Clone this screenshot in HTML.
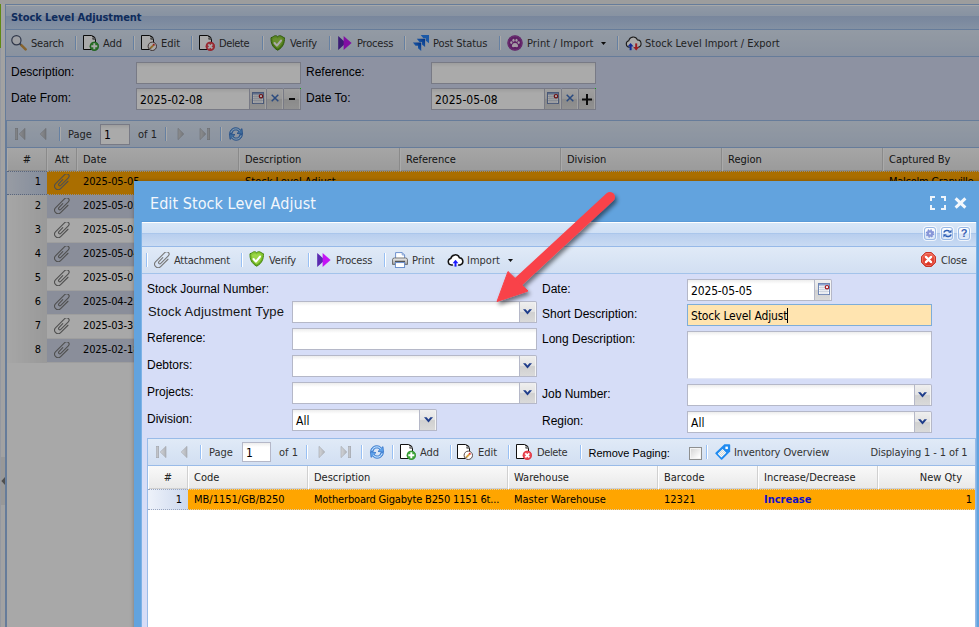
<!DOCTYPE html>
<html><head><meta charset="utf-8"><title>Stock Level Adjustment</title>
<style>
html,body{margin:0;padding:0;}
body{width:979px;height:627px;overflow:hidden;position:relative;background:#fff;font-family:"DejaVu Sans Condensed","Liberation Sans",sans-serif;font-size:11px;color:#222;}
.a{position:absolute;}
.t{position:absolute;white-space:nowrap;line-height:14px;height:14px;color:#333;}
.lb{position:absolute;white-space:nowrap;font-family:"Liberation Sans",sans-serif;font-size:12px;line-height:14px;color:#000;}
.sep{position:absolute;width:1px;height:14px;background:#98c0f4;box-shadow:1px 0 0 #fff;}
.inp{position:absolute;box-sizing:border-box;border:1px solid #b5b8c8;background:#fff linear-gradient(#ededed,#fff 4px);height:22px;}
.trg{position:absolute;box-sizing:border-box;width:17px;height:22px;border:1px solid #b5b8c8;border-left:0;background:linear-gradient(#efefef 0,#e3e3e3 47%,#d0d0d0 53%,#dadada 100%);border-radius:0 2px 0 0;box-shadow:inset -1px 0 0 #f4f4f4;}
.it{position:absolute;white-space:nowrap;font-size:12px;line-height:14px;color:#000;}
.hd{position:absolute;box-sizing:border-box;top:0;height:23px;border-right:1px solid #d0d0d0;border-left:1px solid #fff;line-height:24px;padding-left:5px;color:#222;}
svg{position:absolute;overflow:visible;}
</style></head><body>
<svg width="0" height="0" style="left:0;top:0;width:0;height:0">
<defs>
<linearGradient id="gJira" x1="1" y1="0" x2="0.2" y2="0.8"><stop offset="0.1" stop-color="#0a50c4"/><stop offset="0.7" stop-color="#2682fa"/></linearGradient>
<linearGradient id="gGreen" x1="0" y1="0" x2="0" y2="1"><stop offset="0" stop-color="#8fd03a"/><stop offset="1" stop-color="#5ea516"/></linearGradient>
<linearGradient id="gRed" x1="0" y1="0" x2="0" y2="1"><stop offset="0" stop-color="#f0604e"/><stop offset="1" stop-color="#d82a1c"/></linearGradient>
<linearGradient id="gPg" x1="0" y1="0" x2="1" y2="0"><stop offset="0" stop-color="#d2d4d8"/><stop offset="1" stop-color="#b0b3b8"/></linearGradient>
<linearGradient id="gPr" x1="0" y1="0" x2="0" y2="1"><stop offset="0" stop-color="#f0f0f0"/><stop offset="1" stop-color="#9a9a9a"/></linearGradient>
<symbol id="clip" viewBox="0 0 16 16"><g transform="translate(8.4 7.9) rotate(-45)"><path d="M4.4 3.5 L-6 3.5 A3.5 3.5 0 0 1 -6 -3.5 L7.1 -3.5 A2.4 2.4 0 0 1 7.1 1.3 L-3.6 1.3 A1.3 1.3 0 0 1 -3.6 -1.3 L1.8 -1.3" fill="none" stroke="#787878" stroke-width="1.1" stroke-linecap="round"/></g></symbol>
<symbol id="search" viewBox="0 0 16 16"><circle cx="5.4" cy="5.2" r="4.6" fill="#eceff5" stroke="#46526e" stroke-width="1.2"/><path d="M8.8 8.6 L10.4 10.2" stroke="#46526e" stroke-width="2"/><path d="M10.6 10.3 L14.6 14.3" stroke="#c99546" stroke-width="2.6" stroke-linecap="round"/></symbol>
<symbol id="pgbase" viewBox="0 0 16 16"><path d="M0.5 0.5 H8.6 Q12.5 1.2 12.5 5 V14.5 H0.5Z" fill="#fff" stroke="#111" stroke-width="1"/><path d="M8.6 0.6 Q11.2 2.2 9.8 4.2 Q11.4 3.4 12.4 4.8" fill="#fff" stroke="#111" stroke-width="0.8"/></symbol>
<symbol id="padd" viewBox="0 0 16 16"><use href="#pgbase"/><circle cx="11.3" cy="11.3" r="4.6" fill="#3ea63a"/><circle cx="11.3" cy="11.3" r="4.1" fill="none" stroke="#2f8f2f" stroke-width="0.7"/><path d="M11.3 8.3 v6 M8.3 11.3 h6" stroke="#fff" stroke-width="1.9"/></symbol>
<symbol id="pedit" viewBox="0 0 16 16"><use href="#pgbase"/><circle cx="11.3" cy="11.3" r="4.2" fill="#fff" stroke="#5c4a4a" stroke-width="1"/><path d="M9.2 13.4 L12.2 10.4" stroke="#d9a441" stroke-width="2"/><path d="M12.2 10.4 L13.4 9.2" stroke="#e8322a" stroke-width="2"/><path d="M8.6 14 l0.3 -1.3 l1 1z" fill="#444"/></symbol>
<symbol id="pdel" viewBox="0 0 16 16"><use href="#pgbase"/><circle cx="11.3" cy="11.3" r="4.6" fill="#ec4a55"/><circle cx="11.3" cy="11.3" r="4.1" fill="none" stroke="#d83442" stroke-width="0.7"/><path d="M9.3 9.3 l4 4 M13.3 9.3 l-4 4" stroke="#fff" stroke-width="1.8"/></symbol>
<symbol id="verify" viewBox="0 0 16 16"><path d="M7.7 1.8 C6.6 0.3 4.6 0.5 3.4 1.5 C2.6 2.1 1.8 2.5 1 2.7 C0.7 8 2.5 12.4 7.7 15.2 C12.9 12.4 14.7 8 14.4 2.7 C13.6 2.5 12.8 2.1 12 1.5 C10.8 0.5 8.8 0.3 7.7 1.8z" fill="url(#gGreen)" stroke="#47850f" stroke-width="1"/><path d="M7.7 3.6 C6.6 2.4 4.8 3 2.9 4 C2.8 8 4.2 11.2 7.7 13.4 C11.2 11.2 12.6 8 12.5 4 C10.6 3 8.8 2.4 7.7 3.6z" fill="#a8dd52" opacity="0.7"/><path d="M4.5 8 L6.9 10.6 L11 5.6" fill="none" stroke="#fff" stroke-width="2.1" stroke-linecap="round" stroke-linejoin="round"/></symbol>
<symbol id="process" viewBox="0 0 16 16"><path d="M1.2 1 L9 8 L1.2 15z" fill="#5a2ab0"/><path d="M6.6 1 L14.6 8 L6.6 15z" fill="#c414f5"/></symbol>
<symbol id="post" viewBox="0 0 17 17"><path d="M8.7 0.0 H17.0 V8.3 L13.8 5.7 V3.2 H11.3z" fill="#2a86fb"/><path d="M4.8 3.8 H13.1 V12.1 L9.9 9.5 V7.0 H7.4z" fill="url(#gJira)"/><path d="M0.9 7.6 H9.2 V15.9 L6.0 13.3 V10.8 H3.5z" fill="url(#gJira)"/></symbol>
<symbol id="paw" viewBox="0 0 16 16"><circle cx="8" cy="8" r="7.7" fill="#8d2f96"/><circle cx="8" cy="8" r="6.9" fill="none" stroke="#a64bb0" stroke-width="0.8"/><path d="M8 8 C5.8 8 4.6 10 5 11.4 C5.4 12.6 6.8 12 8 12 C9.2 12 10.6 12.6 11 11.4 C11.4 10 10.2 8 8 8z" fill="#f6e8f7"/><ellipse cx="4.3" cy="7.6" rx="1.1" ry="1.4" fill="#f6e8f7"/><ellipse cx="6.5" cy="5.3" rx="1.1" ry="1.5" fill="#f6e8f7"/><ellipse cx="9.5" cy="5.3" rx="1.1" ry="1.5" fill="#f6e8f7"/><ellipse cx="11.7" cy="7.6" rx="1.1" ry="1.4" fill="#f6e8f7"/></symbol>
<symbol id="cloudio" viewBox="0 0 17 16"><path d="M4.4 12.2 a3.3 3.3 0 0 1 -0.6 -6.5 a4.5 4.5 0 0 1 8.6 -0.8 a3.7 3.7 0 0 1 0.8 7.3" fill="#fff" stroke="#2a2a2a" stroke-width="1.1" stroke-linecap="round"/><path d="M5.6 15.2 v-5" stroke="#1a3fe0" stroke-width="2"/><path d="M2.6 11.6 L5.6 8 L8.6 11.6z" fill="#1a3fe0"/><path d="M11.2 8.4 v4.6" stroke="#ea2a30" stroke-width="2"/><path d="M8.2 12 L11.2 15.6 L14.2 12z" fill="#ea2a30"/></symbol>
<symbol id="cloudup" viewBox="0 0 17 16"><path d="M5.4 13 h-1 a3.3 3.3 0 0 1 -0.6 -6.5 a4.5 4.5 0 0 1 8.6 -0.8 a3.7 3.7 0 0 1 0.6 7.3 h-1.4" fill="#fff" stroke="#111" stroke-width="1.5" stroke-linecap="round"/><path d="M8.5 14.6 v-4.4" stroke="#1a1aff" stroke-width="2"/><path d="M5.6 11.2 L8.5 7.8 L11.4 11.2z" fill="#1a1aff"/></symbol>
<symbol id="cal" viewBox="0 0 12 12"><rect x="0.5" y="0.5" width="11" height="11" fill="#fdfdfd" stroke="#6f86b4"/><rect x="1" y="1" width="10" height="1.6" fill="#8fa6d0"/><path d="M1 4.5h10M1 6.5h10M1 8.5h10M3 2.5v9M5 2.5v9M7 2.5v9M9 2.5v9" stroke="#c3cad8" stroke-width="0.7"/><circle cx="9" cy="4.2" r="1.7" fill="#fff" stroke="#a4181e" stroke-width="1.2"/></symbol>
<symbol id="pfirst" viewBox="0 0 16 16"><rect x="3.3" y="2.3" width="2.4" height="11.4" fill="url(#gPg)" stroke="#a2a6ac" stroke-width="0.6"/><path d="M13 2.3 L7.2 8 L13 13.7z" fill="url(#gPg)" stroke="#a2a6ac" stroke-width="0.6"/></symbol>
<symbol id="pprev" viewBox="0 0 16 16"><path d="M10 2.3 L4.2 8 L10 13.7z" fill="url(#gPg)" stroke="#a2a6ac" stroke-width="0.6"/></symbol>
<symbol id="pnext" viewBox="0 0 16 16"><path d="M6 2.3 L11.8 8 L6 13.7z" fill="url(#gPg)" stroke="#a2a6ac" stroke-width="0.6"/></symbol>
<symbol id="plast" viewBox="0 0 16 16"><path d="M3 2.3 L8.8 8 L3 13.7z" fill="url(#gPg)" stroke="#a2a6ac" stroke-width="0.6"/><rect x="10.3" y="2.3" width="2.4" height="11.4" fill="url(#gPg)" stroke="#a2a6ac" stroke-width="0.6"/></symbol>
<symbol id="refresh" viewBox="0 0 16 16"><path d="M1.6 7.4 C1.8 3.8 5 1.4 8.4 1.7 C10.2 1.9 11.6 2.8 12.5 4 L14 2.6 L14.6 8.2 L9 7.4 L10.7 5.8 C10.1 4.8 9.2 4.1 8 4 C6 3.9 4.4 5.2 4.2 7.4z" fill="#5fa2ea" stroke="#2a6cc4" stroke-width="0.7"/><path d="M14.4 8.6 C14.2 12.2 11 14.6 7.6 14.3 C5.8 14.1 4.4 13.2 3.5 12 L2 13.4 L1.4 7.8 L7 8.6 L5.3 10.2 C5.9 11.2 6.8 11.9 8 12 C10 12.1 11.6 10.8 11.8 8.6z" fill="#5fa2ea" stroke="#2a6cc4" stroke-width="0.7"/><path d="M2.9 6.6 C3.6 4 6 2.7 8.3 2.9 C9.7 3 10.9 3.7 11.7 4.7" fill="none" stroke="#d6e9fd" stroke-width="0.9"/><path d="M13.1 9.4 C12.4 12 10 13.3 7.7 13.1 C6.3 13 5.1 12.3 4.3 11.3" fill="none" stroke="#d6e9fd" stroke-width="0.9"/></symbol>
<symbol id="printer" viewBox="0 0 16 16"><path d="M3.6 6.4 V0.6 h6.6 l2.4 2.4 V6.4" fill="#fff" stroke="#5f86c8" stroke-width="0.9"/><path d="M10.2 0.6 v2.4 h2.4" fill="none" stroke="#5f86c8" stroke-width="0.7"/><path d="M2.4 6 h11.2 a1.9 1.9 0 0 1 1.9 1.9 V12.4 h-15 V7.9 a1.9 1.9 0 0 1 1.9 -1.9z" fill="url(#gPr)" stroke="#666" stroke-width="0.9"/><rect x="3.4" y="10.6" width="9.2" height="4.9" fill="#fff" stroke="#5f86c8" stroke-width="0.9"/><path d="M3 9.4 h10" stroke="#555" stroke-width="1.2"/></symbol>
<symbol id="closei" viewBox="0 0 16 16"><path d="M4.9 0.6 h6.2 l4.3 4.3 v6.2 l-4.3 4.3 h-6.2 l-4.3 -4.3 v-6.2z" fill="url(#gRed)" stroke="#c4261a" stroke-width="1"/><path d="M5.3 1.7 h5.4 l3.6 3.6 v5.4 l-3.6 3.6 h-5.4 l-3.6 -3.6 v-5.4z" fill="none" stroke="#f59a8c" stroke-width="0.8" opacity="0.8"/><path d="M5.2 5.2 l5.6 5.6 M10.8 5.2 l-5.6 5.6" stroke="#fff" stroke-width="2.4" stroke-linecap="round"/></symbol>
<symbol id="tag" viewBox="0 0 16 16"><path d="M9.4 0.3 H14.4 Q15.2 0.3 15.2 1.1 V7.4 L7.2 15.6 Q6.6 16.1 6 15.6 L0.5 9.8 Q0 9.2 0.5 8.7z" fill="#1f8af0"/><rect x="10.4" y="2.6" width="2.5" height="2.5" fill="#fff"/><g transform="translate(7 9.3) rotate(-45)"><rect x="-3.4" y="-2.6" width="6.8" height="5.2" fill="#fff"/><path d="M-2 -2.6v5.2M-0.6 -2.6v5.2M0.8 -2.6v5.2M2.2 -2.6v5.2" stroke="#9aa" stroke-width="0.5"/></g></symbol>
<symbol id="combo" viewBox="0 0 9 6"><path d="M0 0.2 H2.6 L4.5 2.4 L6.4 0.2 H9 L4.5 5.6z" fill="#1f3d8a"/></symbol>
</defs></svg>

<!-- ================= BACKGROUND PAGE ================= -->
<div id="bg" class="a" style="left:0;top:0;width:979px;height:627px;background:#fdfdfd;">
 <div class="a" style="left:0;top:0;width:979px;height:4px;background:#ececec;"></div>
 <div class="a" style="left:0;top:4px;width:5px;height:623px;background:#f4f4f4;"></div>
 <div class="a" style="left:0;top:4px;width:1px;height:44px;background:#8fce1c;"></div>
 <div class="a" style="left:0;top:48px;width:1px;height:579px;background:#dfe4f0;"></div>
 <div class="a" style="left:1px;top:457px;width:4px;height:48px;background:#e4e4e4;"></div>
 <svg style="left:1px;top:477px" width="4" height="8"><path d="M4 0 L0.4 4 L4 8z" fill="#777"/></svg>
 <!-- panel border -->
 <div class="a" style="left:5px;top:4px;width:1px;height:623px;background:#99bbe8;"></div>
 <!-- panel header -->
 <div class="a" style="left:6px;top:4px;width:973px;height:26px;box-sizing:border-box;border-top:1px solid #99bbe8;border-bottom:1px solid #99bbe8;background:linear-gradient(#fbfcfe 0,#fbfcfe 1px,#d9e5f7 1px,#cbdcf3 11px,#b5caeb 11px,#bacfef 16px,#c6daf5 24px);"></div>
 <div class="t" style="left:11px;top:11px;font-weight:bold;color:#15428b;letter-spacing:-0.08px;">Stock Level Adjustment</div>
 <!-- toolbar -->
 <div class="a" style="left:6px;top:30px;width:973px;height:27px;box-sizing:border-box;border-bottom:1px solid #99bbe8;background:linear-gradient(#dde8f6,#cfdcf0);"></div>
 <!-- form -->
 <div class="a" style="left:6px;top:57px;width:973px;height:63px;background:#d4dcf4;"></div>
 <!-- paging toolbar -->
 <div class="a" style="left:6px;top:120px;width:973px;height:28px;box-sizing:border-box;border-left:1px solid #99bbe8;border-top:1px solid #99bbe8;border-bottom:1px solid #99bbe8;background:linear-gradient(#dde8f6,#cfdcf0);"></div>
 <!-- grid header -->
 <div class="a" style="left:6px;top:148px;width:973px;height:23px;box-sizing:border-box;border-left:1px solid #99bbe8;border-bottom:1px solid #d0d0d0;background:linear-gradient(#f9f9f9,#e9e9e9);"></div>
 <div class="a" style="left:6px;top:171px;width:1px;height:456px;background:#99bbe8;"></div>
<svg style="left:11px;top:35px" width="16" height="16"><use href="#search"/></svg>
<div class="t" style="left:31px;top:37px;letter-spacing:-0.2px">Search</div>
<svg style="left:83px;top:35px" width="16" height="16"><use href="#padd"/></svg>
<div class="t" style="left:103px;top:37px;">Add</div>
<svg style="left:141px;top:35px" width="16" height="16"><use href="#pedit"/></svg>
<div class="t" style="left:161px;top:37px;">Edit</div>
<svg style="left:199px;top:35px" width="16" height="16"><use href="#pdel"/></svg>
<div class="t" style="left:219px;top:37px;letter-spacing:-0.38px">Delete</div>
<svg style="left:270px;top:35px" width="16" height="16"><use href="#verify"/></svg>
<div class="t" style="left:290px;top:37px;letter-spacing:-0.15px">Verify</div>
<svg style="left:337px;top:35px" width="16" height="16"><use href="#process"/></svg>
<div class="t" style="left:357px;top:37px;letter-spacing:-0.18px">Process</div>
<svg style="left:412px;top:35px" width="17" height="17"><use href="#post"/></svg>
<div class="t" style="left:433px;top:37px;letter-spacing:-0.1px">Post Status</div>
<svg style="left:507px;top:35px" width="16" height="16"><use href="#paw"/></svg>
<div class="t" style="left:527px;top:37px;letter-spacing:0.1px">Print / Import</div>
<svg style="left:625px;top:35px" width="17" height="16"><use href="#cloudio"/></svg>
<div class="t" style="left:645px;top:37px;">Stock Level Import / Export</div>
<div class="sep" style="left:75px;top:36px"></div>
<div class="sep" style="left:133px;top:36px"></div>
<div class="sep" style="left:191px;top:36px"></div>
<div class="sep" style="left:262px;top:36px"></div>
<div class="sep" style="left:329px;top:36px"></div>
<div class="sep" style="left:404px;top:36px"></div>
<div class="sep" style="left:499px;top:36px"></div>
<div class="sep" style="left:617px;top:36px"></div>
<svg style="left:601px;top:42px" width="5" height="3"><path d="M0 0h5L2.5 3z" fill="#111"/></svg>
<div class="lb" style="left:11px;top:65px">Description:</div>
<div class="lb" style="left:306px;top:65px">Reference:</div>
<div class="lb" style="left:11px;top:91px">Date From:</div>
<div class="lb" style="left:306px;top:91px">Date To:</div>
<div class="inp" style="left:136px;top:62px;width:165px"></div>
<div class="inp" style="left:431px;top:62px;width:165px"></div>
<div class="inp" style="left:136px;top:88px;width:114px"></div>
<div class="it" style="left:140px;top:93px">2025-02-08</div>
<div class="trg" style="left:250px;top:88px;width:17px"></div>
<div class="trg" style="left:267px;top:88px;width:17px"></div>
<div class="trg" style="left:284px;top:88px;width:17px"></div>
<svg style="left:252px;top:92px" width="12" height="12"><use href="#cal"/></svg>
<svg style="left:271px;top:94px" width="8" height="8"><path d="M0.7 0.7l6.6 6.6M7.3 0.7l-6.6 6.6" stroke="#3f6fbf" stroke-width="1.5"/></svg>
<svg style="left:288px;top:94px" width="9" height="9"><path d="M1 5h6" stroke="#111" stroke-width="2"/></svg>
<div class="inp" style="left:431px;top:88px;width:114px"></div>
<div class="it" style="left:435px;top:93px">2025-05-08</div>
<div class="trg" style="left:545px;top:88px;width:17px"></div>
<div class="trg" style="left:562px;top:88px;width:17px"></div>
<div class="trg" style="left:579px;top:88px;width:17px"></div>
<svg style="left:547px;top:92px" width="12" height="12"><use href="#cal"/></svg>
<svg style="left:566px;top:94px" width="8" height="8"><path d="M0.7 0.7l6.6 6.6M7.3 0.7l-6.6 6.6" stroke="#3f6fbf" stroke-width="1.5"/></svg>
<svg style="left:582px;top:94px" width="10" height="11"><path d="M0 5.5h10M5 0v11" stroke="#111" stroke-width="2"/></svg><div class="a" style="left:300px;top:88px;width:1px;height:1px;background:#1eff1e"></div><div class="a" style="left:595px;top:88px;width:1px;height:1px;background:#1eff1e"></div>
<svg style="left:12px;top:126px" width="16" height="16"><use href="#pfirst"/></svg>
<svg style="left:36px;top:126px" width="16" height="16"><use href="#pprev"/></svg>
<div class="sep" style="left:59px;top:127px"></div>
<div class="t" style="left:68px;top:128px;">Page</div>
<div class="inp" style="left:100px;top:124px;width:30px;height:21px"></div>
<div class="it" style="left:104px;top:128px;">1</div>
<div class="t" style="left:138px;top:128px;">of 1</div>
<div class="sep" style="left:165px;top:127px"></div>
<svg style="left:172px;top:126px" width="16" height="16"><use href="#pnext"/></svg>
<svg style="left:197px;top:126px" width="16" height="16"><use href="#plast"/></svg>
<div class="sep" style="left:220px;top:127px"></div>
<svg style="left:228px;top:126px" width="16" height="16"><use href="#refresh"/></svg>
<div class="hd" style="left:7px;top:148px;width:40px;text-align:center;padding-left:0;">#</div>
<div class="hd" style="left:47px;top:148px;width:30px;text-align:center;padding-left:0;">Att</div>
<div class="hd" style="left:77px;top:148px;width:162px;">Date</div>
<div class="hd" style="left:239px;top:148px;width:161px;">Description</div>
<div class="hd" style="left:400px;top:148px;width:161px;">Reference</div>
<div class="hd" style="left:561px;top:148px;width:161px;">Division</div>
<div class="hd" style="left:722px;top:148px;width:161px;">Region</div>
<div class="hd" style="left:883px;top:148px;width:161px;">Captured By</div>
<div class="a" style="left:47px;top:171px;width:932px;height:24px;box-sizing:border-box;background:#ffa500;border-top:1px dotted #d4d4d4;border-bottom:1px dotted #d4d4d4;"></div>
<div class="a" style="left:7px;top:171px;width:40px;height:24px;box-sizing:border-box;background:linear-gradient(90deg,#e4eaf6,#c6d3ea);border-top:1px dotted #8899bb;border-bottom:1px dotted #8899bb;"></div>
<div class="t" style="left:7px;top:175px;width:34px;text-align:right;color:#000">1</div>
<svg style="left:54px;top:174px" width="16" height="16"><use href="#clip"/></svg>
<div class="t" style="left:83px;top:175px;letter-spacing:-0.12px;color:#000">2025-05-05</div>
<div class="a" style="left:47px;top:195px;width:932px;height:24px;box-sizing:border-box;background:#d0d6e7;border-bottom:1px solid #ededed;"></div>
<div class="a" style="left:7px;top:195px;width:40px;height:24px;background:linear-gradient(90deg,#fafafa,#e6e6e6);"></div>
<div class="t" style="left:7px;top:199px;width:34px;text-align:right;color:#000">2</div>
<svg style="left:54px;top:198px" width="16" height="16"><use href="#clip"/></svg>
<div class="t" style="left:83px;top:199px;letter-spacing:-0.12px;color:#000">2025-05-05</div>
<div class="a" style="left:47px;top:219px;width:932px;height:24px;box-sizing:border-box;background:#fdfdfd;border-bottom:1px solid #ededed;"></div>
<div class="a" style="left:7px;top:219px;width:40px;height:24px;background:linear-gradient(90deg,#fafafa,#e6e6e6);"></div>
<div class="t" style="left:7px;top:223px;width:34px;text-align:right;color:#000">3</div>
<svg style="left:54px;top:222px" width="16" height="16"><use href="#clip"/></svg>
<div class="t" style="left:83px;top:223px;letter-spacing:-0.12px;color:#000">2025-05-05</div>
<div class="a" style="left:47px;top:243px;width:932px;height:24px;box-sizing:border-box;background:#d0d6e7;border-bottom:1px solid #ededed;"></div>
<div class="a" style="left:7px;top:243px;width:40px;height:24px;background:linear-gradient(90deg,#fafafa,#e6e6e6);"></div>
<div class="t" style="left:7px;top:247px;width:34px;text-align:right;color:#000">4</div>
<svg style="left:54px;top:246px" width="16" height="16"><use href="#clip"/></svg>
<div class="t" style="left:83px;top:247px;letter-spacing:-0.12px;color:#000">2025-05-04</div>
<div class="a" style="left:47px;top:267px;width:932px;height:24px;box-sizing:border-box;background:#fdfdfd;border-bottom:1px solid #ededed;"></div>
<div class="a" style="left:7px;top:267px;width:40px;height:24px;background:linear-gradient(90deg,#fafafa,#e6e6e6);"></div>
<div class="t" style="left:7px;top:271px;width:34px;text-align:right;color:#000">5</div>
<svg style="left:54px;top:270px" width="16" height="16"><use href="#clip"/></svg>
<div class="t" style="left:83px;top:271px;letter-spacing:-0.12px;color:#000">2025-05-01</div>
<div class="a" style="left:47px;top:291px;width:932px;height:24px;box-sizing:border-box;background:#d0d6e7;border-bottom:1px solid #ededed;"></div>
<div class="a" style="left:7px;top:291px;width:40px;height:24px;background:linear-gradient(90deg,#fafafa,#e6e6e6);"></div>
<div class="t" style="left:7px;top:295px;width:34px;text-align:right;color:#000">6</div>
<svg style="left:54px;top:294px" width="16" height="16"><use href="#clip"/></svg>
<div class="t" style="left:83px;top:295px;letter-spacing:-0.12px;color:#000">2025-04-25</div>
<div class="a" style="left:47px;top:315px;width:932px;height:24px;box-sizing:border-box;background:#fdfdfd;border-bottom:1px solid #ededed;"></div>
<div class="a" style="left:7px;top:315px;width:40px;height:24px;background:linear-gradient(90deg,#fafafa,#e6e6e6);"></div>
<div class="t" style="left:7px;top:319px;width:34px;text-align:right;color:#000">7</div>
<svg style="left:54px;top:318px" width="16" height="16"><use href="#clip"/></svg>
<div class="t" style="left:83px;top:319px;letter-spacing:-0.12px;color:#000">2025-03-31</div>
<div class="a" style="left:47px;top:339px;width:932px;height:24px;box-sizing:border-box;background:#d0d6e7;border-bottom:1px solid #ededed;"></div>
<div class="a" style="left:7px;top:339px;width:40px;height:24px;background:linear-gradient(90deg,#fafafa,#e6e6e6);"></div>
<div class="t" style="left:7px;top:343px;width:34px;text-align:right;color:#000">8</div>
<svg style="left:54px;top:342px" width="16" height="16"><use href="#clip"/></svg>
<div class="t" style="left:83px;top:343px;letter-spacing:-0.12px;color:#000">2025-02-18</div>
<div class="t" style="left:245px;top:175px;color:#000">Stock Level Adjust</div>
<div class="t" style="left:889px;top:175px;letter-spacing:-0.25px;color:#000">Malcolm Granville</div>
</div>

<!-- mask -->
<div class="a" style="left:0;top:0;width:979px;height:627px;background:rgba(0,0,0,0.335);"></div>

<!-- ================= WINDOW ================= -->
<div id="win" class="a" style="left:134px;top:181px;width:860px;height:460px;background:#62a3de;box-shadow:0 0 4px rgba(0,0,0,0.28);"></div>
<div class="a" style="left:150px;top:193px;font-size:16px;letter-spacing:0.07px;line-height:22px;color:#f3f7fc;white-space:nowrap;">Edit Stock Level Adjust</div>

<svg style="left:930px;top:196px" width="16" height="14"><path d="M1 5V1h4M11 1h4v4M15 9v4h-4M5 13H1V9" fill="none" stroke="#eef4fb" stroke-width="2"/></svg>
<svg style="left:954px;top:197px" width="13" height="12"><path d="M1.6 1.4l9.8 9.2M11.4 1.4l-9.8 9.2" stroke="#f4f8fc" stroke-width="3"/></svg>
<div class="a" style="left:141px;top:221px;width:836px;height:420px;background:#7db2e6;"></div><div class="a" style="left:141px;top:221px;width:836px;height:1px;background:#5a9ad8;"></div><div class="a" style="left:142px;top:222px;width:834px;height:420px;background:#d6ddf7;"></div>
<div class="a" style="left:142px;top:222px;width:834px;height:25px;box-sizing:border-box;border-bottom:1px solid #96b9e8;background:linear-gradient(#ffffff 0,#ffffff 1px,#d8e6f7 1px,#d0e0f5 11px,#aac6eb 11px,#aac6eb 12px,#b8ceee 12px,#c9dbf3 24px);"></div>
<div class="a" style="left:924px;top:227px;width:12px;height:13px;box-sizing:border-box;border:1px solid #98b8e6;border-radius:3px;background:linear-gradient(#ffffff,#f2f7fd 45%,#d5e3f6 55%,#e2ecf9);box-shadow:0 0 0 1px rgba(255,255,255,0.75);"></div>
<div class="a" style="left:941px;top:227px;width:12px;height:13px;box-sizing:border-box;border:1px solid #98b8e6;border-radius:3px;background:linear-gradient(#ffffff,#f2f7fd 45%,#d5e3f6 55%,#e2ecf9);box-shadow:0 0 0 1px rgba(255,255,255,0.75);"></div>
<div class="a" style="left:958px;top:227px;width:12px;height:13px;box-sizing:border-box;border:1px solid #98b8e6;border-radius:3px;background:linear-gradient(#ffffff,#f2f7fd 45%,#d5e3f6 55%,#e2ecf9);box-shadow:0 0 0 1px rgba(255,255,255,0.75);"></div>
<svg style="left:925px;top:228px" width="10" height="10"><circle cx="5" cy="5.5" r="3.5" fill="none" stroke="#7f8ed2" stroke-width="1.5" stroke-dasharray="1.45 1.3"/><circle cx="5" cy="5.5" r="3.3" fill="#8796d8"/><circle cx="5" cy="5.5" r="1.1" fill="#dde5f6"/></svg>
<svg style="left:942.5px;top:228.5px" width="9" height="9"><path d="M0.8 3.6 C1.6 1.4 5 0.8 6.6 2.6 M8.2 5.4 C7.4 7.6 4 8.2 2.4 6.4" fill="none" stroke="#2f5fb5" stroke-width="1.5"/><path d="M5.2 3.8 L8.6 3.8 L8.6 0.6z M3.8 5.2 L0.4 5.2 L0.4 8.4z" fill="#2f5fb5"/></svg>
<div class="a" style="left:956.5px;top:225.5px;width:15px;height:15px;line-height:15px;text-align:center;font-family:'Liberation Sans',sans-serif;font-weight:bold;font-size:11px;color:#3a62b5;">?</div>
<div class="a" style="left:142px;top:247px;width:834px;height:27px;box-sizing:border-box;border-bottom:1px solid #a3c3ea;background:linear-gradient(#e0eaf7,#d2dff2);"></div>
<div class="sep" style="left:146px;top:253px"></div>
<svg style="left:154px;top:252px" width="16" height="16"><use href="#clip"/></svg>
<div class="t" style="left:174px;top:254px;letter-spacing:-0.22px">Attachment</div>
<div class="sep" style="left:241px;top:253px"></div>
<svg style="left:249px;top:251px" width="16" height="16"><use href="#verify"/></svg>
<div class="t" style="left:269px;top:254px;letter-spacing:-0.15px">Verify</div>
<div class="sep" style="left:308px;top:253px"></div>
<svg style="left:316px;top:252px" width="16" height="16"><use href="#process"/></svg>
<div class="t" style="left:336px;top:254px;letter-spacing:-0.18px">Process</div>
<div class="sep" style="left:384px;top:253px"></div>
<svg style="left:392px;top:252px" width="16" height="16"><use href="#printer"/></svg>
<div class="t" style="left:412px;top:254px;">Print</div>
<svg style="left:447px;top:252px" width="17" height="16"><use href="#cloudup"/></svg>
<div class="t" style="left:467px;top:254px;">Import</div>
<svg style="left:508px;top:259px" width="5" height="3"><path d="M0 0h5L2.5 3z" fill="#111"/></svg>
<svg style="left:921px;top:252px" width="15" height="15"><use href="#closei"/></svg>
<div class="t" style="left:941px;top:254px;letter-spacing:-0.2px">Close</div>
<div class="lb" style="left:147px;top:282px">Stock Journal Number:</div>
<div class="lb" style="left:147px;top:331px">Reference:</div>
<div class="lb" style="left:147px;top:358px">Debtors:</div>
<div class="lb" style="left:147px;top:385px">Projects:</div>
<div class="lb" style="left:147px;top:412px">Division:</div>
<div class="lb" style="left:148px;top:304px;font-size:13px;letter-spacing:0.2px;line-height:16px;color:#151515;">Stock Adjustment Type</div>
<div class="lb" style="left:542px;top:282px">Date:</div>
<div class="lb" style="left:542px;top:307px">Short Description:</div>
<div class="lb" style="left:542px;top:332px">Long Description:</div>
<div class="lb" style="left:542px;top:387px">Job Number:</div>
<div class="lb" style="left:542px;top:414px">Region:</div>
<div class="inp" style="left:292px;top:301px;width:228px"></div><div class="trg" style="left:520px;top:301px"></div><svg style="left:523px;top:309px" width="9" height="6"><use href="#combo"/></svg>
<div class="inp" style="left:292px;top:328px;width:245px"></div>
<div class="inp" style="left:292px;top:355px;width:228px"></div><div class="trg" style="left:520px;top:355px"></div><svg style="left:523px;top:363px" width="9" height="6"><use href="#combo"/></svg>
<div class="inp" style="left:292px;top:382px;width:228px"></div><div class="trg" style="left:520px;top:382px"></div><svg style="left:523px;top:390px" width="9" height="6"><use href="#combo"/></svg>
<div class="inp" style="left:292px;top:409px;width:128px"></div><div class="trg" style="left:420px;top:409px"></div><svg style="left:424px;top:417px" width="9" height="6"><use href="#combo"/></svg>
<div class="it" style="left:296px;top:414px">All</div>
<div class="inp" style="left:687px;top:279px;width:128px"></div><div class="trg" style="left:815px;top:279px"></div>
<svg style="left:818px;top:283px" width="12" height="12"><use href="#cal"/></svg>
<div class="it" style="left:691px;top:284px;letter-spacing:-0.15px">2025-05-05</div>
<div class="inp" style="left:687px;top:304px;width:245px;background:#ffe4b0;border-color:#7eadd9;"></div>
<div class="it" style="left:691px;top:309px;letter-spacing:-0.15px">Stock Level Adjust</div>
<div class="a" style="left:787px;top:308px;width:1px;height:15px;background:#000"></div>
<div class="inp" style="left:687px;top:331px;width:245px;height:48px;border-bottom-color:#e4e8f6"></div>
<div class="inp" style="left:687px;top:384px;width:228px"></div><div class="trg" style="left:915px;top:384px"></div><svg style="left:918px;top:392px" width="9" height="6"><use href="#combo"/></svg>
<div class="inp" style="left:687px;top:411px;width:228px"></div><div class="trg" style="left:915px;top:411px"></div><svg style="left:918px;top:419px" width="9" height="6"><use href="#combo"/></svg>
<div class="it" style="left:691px;top:416px">All</div>
<div class="a" style="left:147px;top:438px;width:829px;height:200px;box-sizing:border-box;border:1px solid #99bbe8;background:#fff;"></div>
<div class="a" style="left:148px;top:439px;width:827px;height:27px;box-sizing:border-box;border-bottom:1px solid #99bbe8;background:linear-gradient(#e0eaf7,#d2dff2);"></div>
<svg style="left:153px;top:444px" width="16" height="16"><use href="#pfirst"/></svg>
<svg style="left:177px;top:444px" width="16" height="16"><use href="#pprev"/></svg>
<div class="sep" style="left:200px;top:445px"></div>
<div class="t" style="left:209px;top:446px;">Page</div>
<div class="inp" style="left:242px;top:442px;width:29px;height:20px"></div><div class="it" style="left:246px;top:446px;">1</div>
<div class="t" style="left:279px;top:446px;">of 1</div>
<div class="sep" style="left:306px;top:445px"></div>
<svg style="left:313px;top:444px" width="16" height="16"><use href="#pnext"/></svg>
<svg style="left:338px;top:444px" width="16" height="16"><use href="#plast"/></svg>
<div class="sep" style="left:361px;top:445px"></div>
<svg style="left:369px;top:444px" width="16" height="16"><use href="#refresh"/></svg>
<div class="sep" style="left:392px;top:445px"></div>
<svg style="left:400px;top:444px" width="16" height="16"><use href="#padd"/></svg>
<div class="t" style="left:420px;top:446px;">Add</div>
<div class="sep" style="left:450px;top:445px"></div>
<svg style="left:457px;top:444px" width="16" height="16"><use href="#pedit"/></svg>
<div class="t" style="left:478px;top:446px;">Edit</div>
<div class="sep" style="left:508px;top:445px"></div>
<svg style="left:516px;top:444px" width="16" height="16"><use href="#pdel"/></svg>
<div class="t" style="left:537px;top:446px;letter-spacing:-0.38px">Delete</div>
<div class="sep" style="left:580px;top:445px"></div>
<div class="lb" style="left:588.5px;top:446px;font-size:11px;">Remove Paging:</div>
<div class="a" style="left:689px;top:447px;width:13px;height:13px;box-sizing:border-box;border:1px solid #8e8f8f;background:linear-gradient(135deg,#d2d2d2,#ffffff 85%);box-shadow:inset 0 0 0 1px #f4f4f4"></div>
<div class="sep" style="left:706px;top:445px"></div>
<svg style="left:715px;top:444px" width="16" height="16"><use href="#tag"/></svg>
<div class="t" style="left:734px;top:446px;letter-spacing:-0.1px">Inventory Overview</div>
<div class="t" style="left:870.5px;top:446px;letter-spacing:-0.12px">Displaying 1 - 1 of 1</div>
<div class="a" style="left:148px;top:466px;width:827px;height:23px;box-sizing:border-box;border-bottom:1px solid #d0d0d0;background:linear-gradient(#f9f9f9,#e9e9e9);"></div>
<div class="hd" style="left:148px;top:466px;width:40px;text-align:center;padding-left:0;">#</div>
<div class="hd" style="left:188px;top:466px;width:120px;">Code</div>
<div class="hd" style="left:308px;top:466px;width:200px;">Description</div>
<div class="hd" style="left:508px;top:466px;width:150px;">Warehouse</div>
<div class="hd" style="left:658px;top:466px;width:100px;">Barcode</div>
<div class="hd" style="left:758px;top:466px;width:120px;">Increase/Decrease</div>
<div class="hd" style="left:878px;top:466px;width:97px;text-align:right;padding-right:13px;border-right:0;">New Qty</div>
<div class="a" style="left:188px;top:489px;width:787px;height:21px;box-sizing:border-box;background:#ffa500;border-top:1px dotted #d6cdb8;border-bottom:1px dotted #d6cdb8;"></div>
<div class="a" style="left:148px;top:489px;width:40px;height:21px;box-sizing:border-box;background:linear-gradient(90deg,#eef2fa,#ccd8ee);border-top:1px dotted #99a6c0;border-bottom:1px dotted #99a6c0;"></div>
<div class="t" style="left:148px;top:493px;width:34px;text-align:right;color:#000">1</div>
<div class="t" style="left:194px;top:493px;color:#000">MB/1151/GB/B250</div>
<div class="t" style="left:314px;top:493px;color:#000;letter-spacing:-0.17px">Motherboard Gigabyte B250 1151 6t...</div>
<div class="t" style="left:514px;top:493px;color:#000">Master Warehouse</div>
<div class="t" style="left:664px;top:493px;color:#000">12321</div>
<div class="t" style="left:764px;top:493px;color:#1010c8;font-weight:bold">Increase</div>
<div class="t" style="left:878px;top:493px;width:94px;text-align:right;color:#000">1</div>
<svg style="left:0;top:0" width="979" height="627"><defs><filter id="sh" x="-20%" y="-20%" width="140%" height="140%"><feGaussianBlur in="SourceAlpha" stdDeviation="2.2"/><feOffset dx="2" dy="3"/><feComponentTransfer><feFuncA type="linear" slope="0.5"/></feComponentTransfer><feMerge><feMergeNode/><feMergeNode in="SourceGraphic"/></feMerge></filter></defs><g filter="url(#sh)"><path d="M610 197 L517 283" stroke="#f9424a" stroke-width="10" stroke-linecap="round"/><path d="M497 301.5 L508 271.5 L528 291z" fill="#f9424a" stroke="#f9424a" stroke-width="1" stroke-linejoin="round"/></g></svg>
</body></html>
